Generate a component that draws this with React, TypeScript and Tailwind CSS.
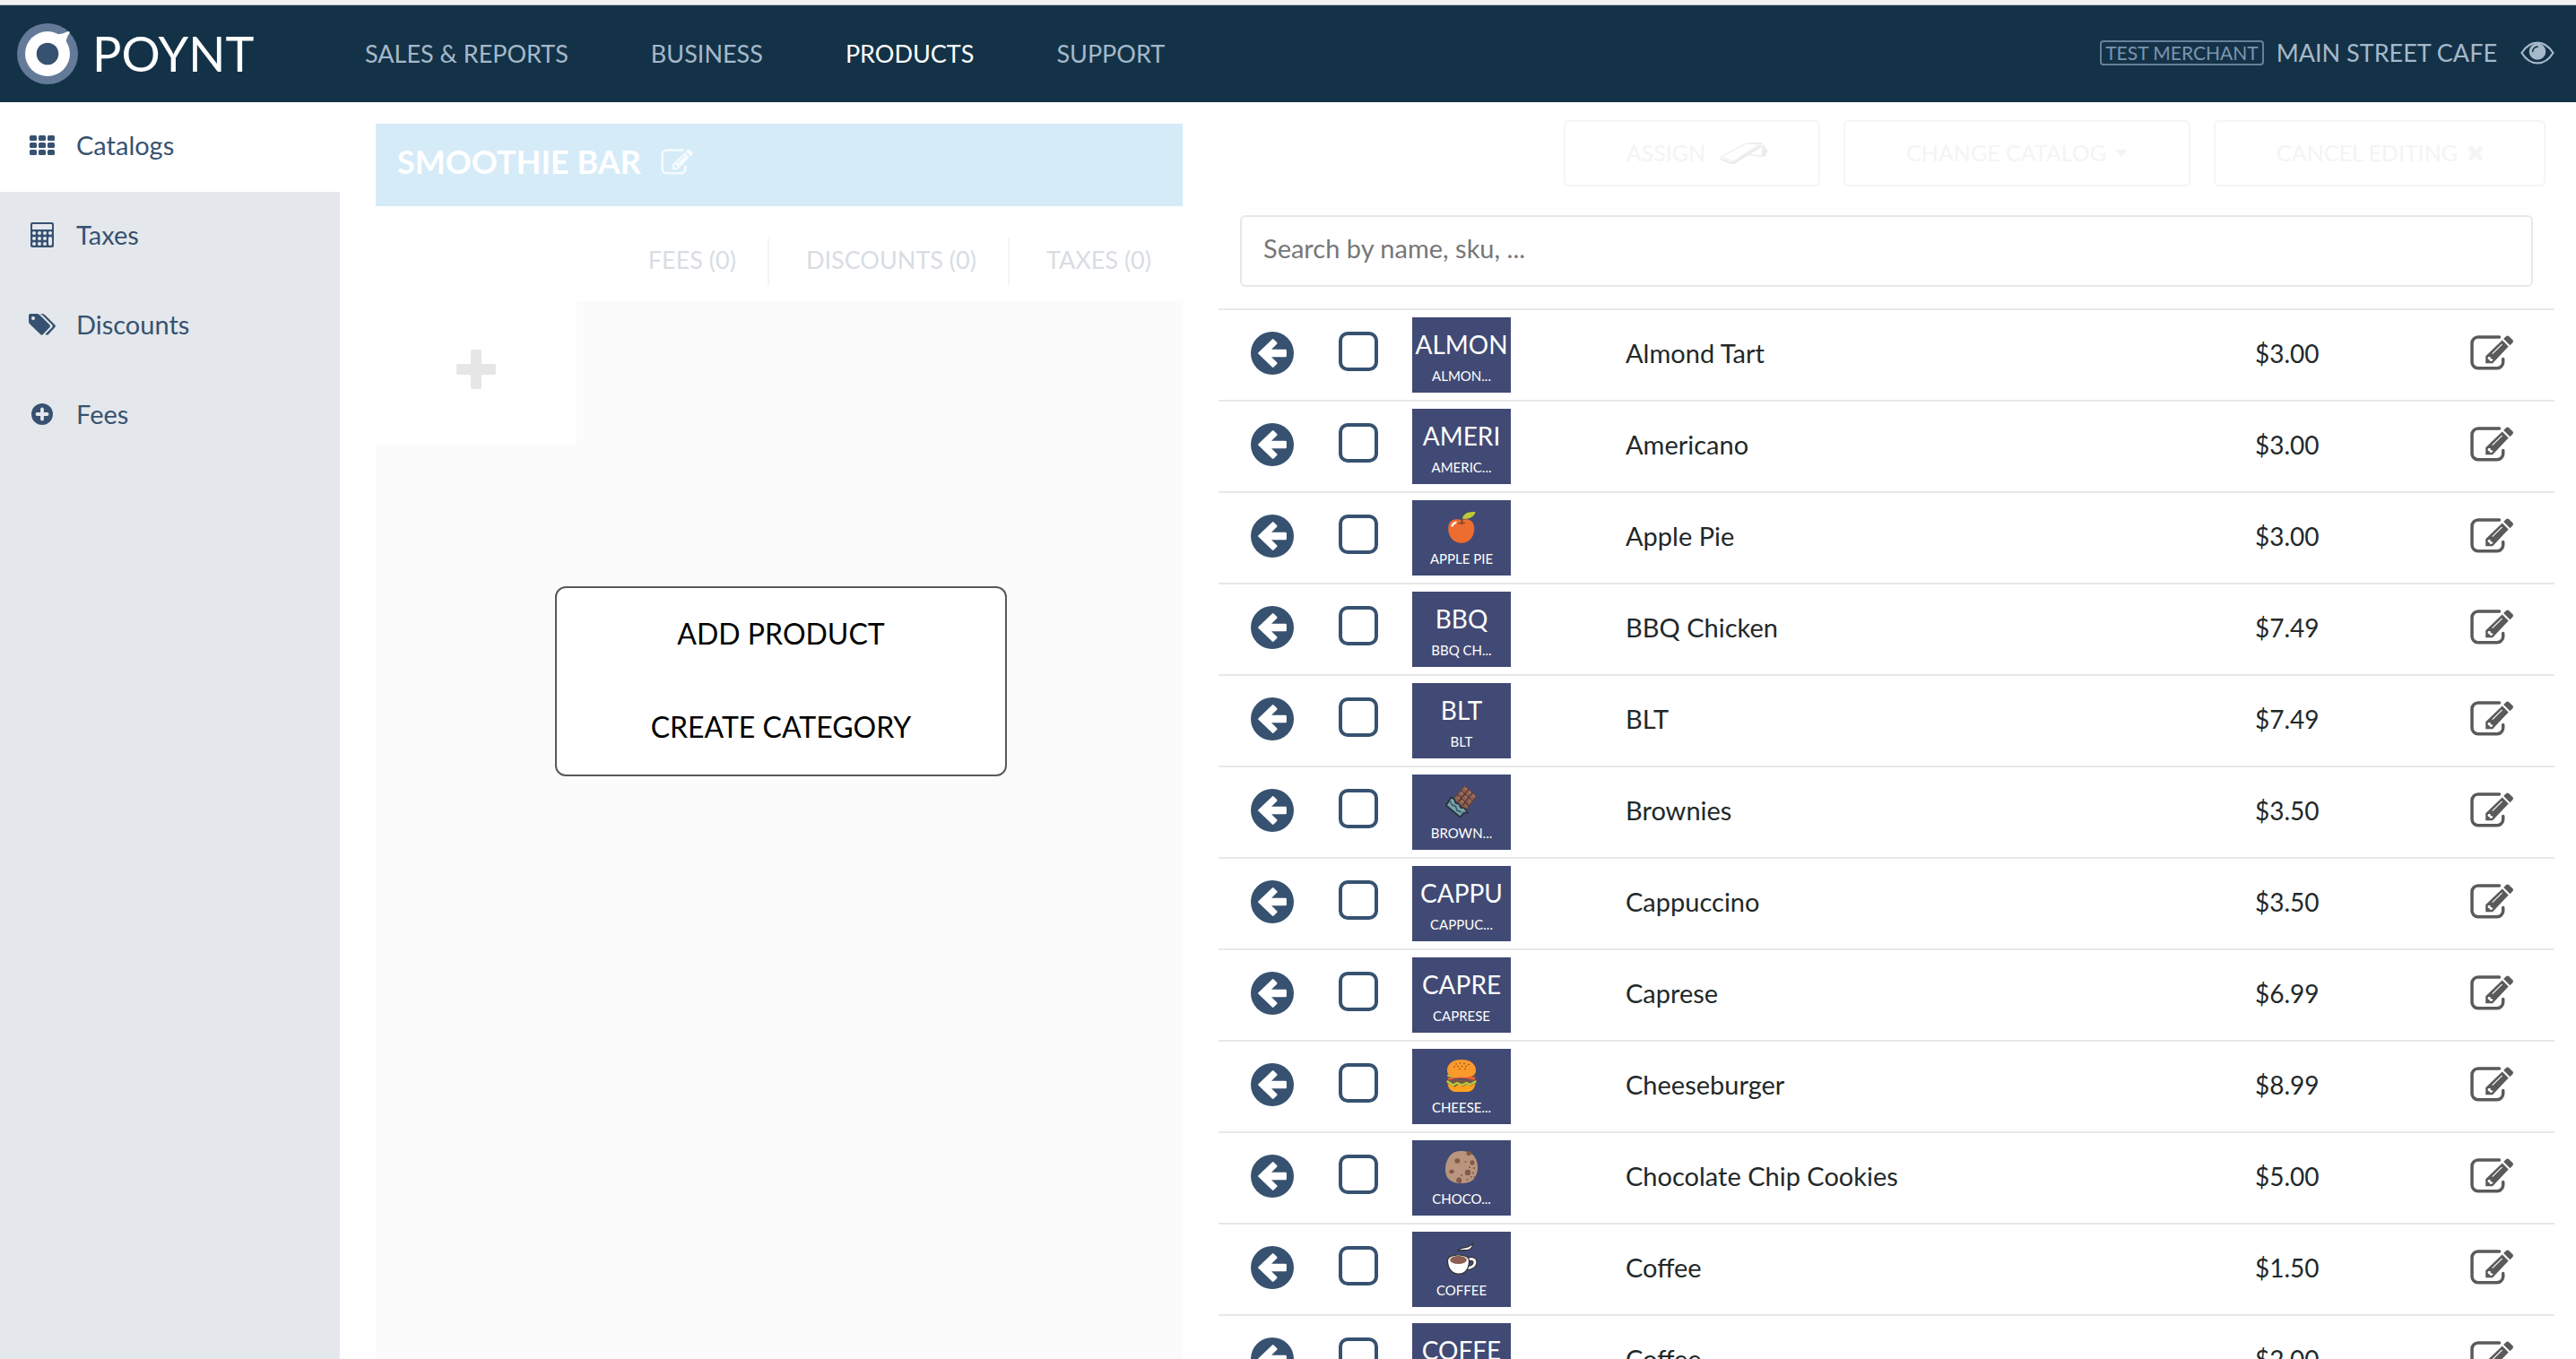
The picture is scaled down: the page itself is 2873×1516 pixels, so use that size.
import React from 'react'

type Glyph = 'apple' | 'chocolate' | 'burger' | 'cookie' | 'coffee'

interface Product {
  name: string
  price: string
  label: string
  short?: string
  glyph?: Glyph
}

const products: Product[] = [
  { name: 'Almond Tart', price: '$3.00', short: 'ALMON', label: 'ALMON...' },
  { name: 'Americano', price: '$3.00', short: 'AMERI', label: 'AMERIC...' },
  { name: 'Apple Pie', price: '$3.00', glyph: 'apple', label: 'APPLE PIE' },
  { name: 'BBQ Chicken', price: '$7.49', short: 'BBQ', label: 'BBQ CH...' },
  { name: 'BLT', price: '$7.49', short: 'BLT', label: 'BLT' },
  { name: 'Brownies', price: '$3.50', glyph: 'chocolate', label: 'BROWN...' },
  { name: 'Cappuccino', price: '$3.50', short: 'CAPPU', label: 'CAPPUC...' },
  { name: 'Caprese', price: '$6.99', short: 'CAPRE', label: 'CAPRESE' },
  { name: 'Cheeseburger', price: '$8.99', glyph: 'burger', label: 'CHEESE...' },
  { name: 'Chocolate Chip Cookies', price: '$5.00', glyph: 'cookie', label: 'CHOCO...' },
  { name: 'Coffee', price: '$1.50', glyph: 'coffee', label: 'COFFEE' },
  { name: 'Coffee', price: '$2.00', short: 'COFFE', label: 'COFFEE' },
]

function LogoMark() {
  return (
    <svg viewBox="0 0 68 68" className="size-[68px]" aria-hidden="true">
      <circle cx="34" cy="34" r="34" fill="#647a99" />
      <path d="M43 12.300c6 .3 10-1.800 14.500-3.300 1.200 0 1.600.8 1 1.800-2.800 4.500-4.500 8.500-3.300 14.500z" fill="#fff" />
      <circle cx="34" cy="34" r="25" fill="#fff" />
      <circle cx="34" cy="34" r="12.300" fill="#375270" />
    </svg>
  )
}

function EyeIcon() {
  return (
    <svg viewBox="0 0 38 26" className="h-[26px] w-[38px]" fill="none" aria-hidden="true">
      <path d="M1.500 13C6 5.600 12 1.600 19 1.600S32 5.600 36.500 13C32 20.400 26 24.400 19 24.400S6 20.400 1.500 13z" stroke="#a5b9ca" strokeWidth="2.200" strokeLinejoin="round" />
      <circle cx="19" cy="11.500" r="9.300" fill="#a5b9ca" />
      <path d="M13.700 11.500a5.400 5.400 0 0 1 5.300-5.400" stroke="#143247" strokeWidth="1.600" strokeLinecap="round" />
    </svg>
  )
}

function EditIcon({ className }: { className: string }) {
  return (
    <svg viewBox="0 0 48 39" className={className} fill="none" aria-hidden="true">
      <path d="M32.500 2H8.800A6.800 6.800 0 0 0 2 8.800v21.100a6.800 6.800 0 0 0 6.800 6.800h21.100a6.800 6.800 0 0 0 6.800-6.800V26.500" stroke="currentColor" strokeWidth="3.500" strokeLinecap="round" />
      <path
        fillRule="evenodd"
        fill="currentColor"
        d="M17.200 23.300 35.700 5.600l7 6.900L25 31.200h-7.800zM24.300 20.300l.8.8L36 10.300l-.8-.8zM20.100 24l-.6 1.600.6 1.300 1.500.3.300 1.500 1.700.3 2-1.600-.9-1-1.900-.3-.3-2z"
      />
      <path d="M37.200 4 40 1.200c1-.9 2.200-.9 3.200 0l4 3.900c1 1 1 2.200.1 3.200l-2.900 3z" fill="currentColor" />
    </svg>
  )
}

function GridIcon() {
  return (
    <svg viewBox="0 0 28 22" className="h-[22px] w-7" fill="currentColor" aria-hidden="true">
      {[0, 8, 16].map((y) => [0, 10, 20].map((x) => <rect key={`${x}-${y}`} x={x} y={y} width="8" height="6" rx="1.500" />))}
    </svg>
  )
}

function CalculatorIcon() {
  return (
    <svg viewBox="0 0 26 28" className="h-7 w-[26px]" aria-hidden="true">
      <rect width="26" height="28" rx="2" fill="currentColor" />
      <g fill="#e4e8ec">
        <rect x="2" y="2" width="22" height="6" rx=".6" />
        {[12, 18, 24].map((y) => [4, 10, 16].map((x) => <circle key={`${x}-${y}`} cx={x} cy={y} r="2" />))}
        <circle cx="22" cy="12" r="2" />
        <rect x="20" y="16" width="4" height="10" rx="2" />
      </g>
    </svg>
  )
}

function TagsIcon() {
  return (
    <svg viewBox="0 0 30 24" className="h-6 w-[30px]" fill="currentColor" aria-hidden="true">
      <path fillRule="evenodd" d="M0 2C0 .8.800 0 2 0h7c1.200 0 2.600.600 3.500 1.500L23.300 12.300c.9.900.9 2.100 0 3L16 23c-.8.900-2 .9-2.900 0L1.500 11.700C.6 10.800 0 9.400 0 8.200zM5 3a2 2 0 1 0 0 4 2 2 0 0 0 0-4z" />
      <path d="M12.300 0h2.500c1.200 0 2.700.600 3.600 1.500L29.200 12.300c.9.900.9 2.100 0 3L22 23c-1.200 1.200-2.400 1-3.400-.2L26 15.300c.9-.9.900-2.100 0-3L15.800 2C14.800 1 13.600.2 12.300 0z" />
    </svg>
  )
}

function PlusCircleIcon() {
  return (
    <svg viewBox="0 0 24 24" className="size-6" aria-hidden="true">
      <circle cx="12" cy="12" r="12" fill="currentColor" />
      <path d="M12 6.500v11M6.500 12h11" stroke="#e4e8ec" strokeWidth="3.800" strokeLinecap="round" />
    </svg>
  )
}

function ArrowLeftIcon() {
  return (
    <svg viewBox="0 0 48 48" className="size-12" aria-hidden="true">
      <circle cx="24" cy="24" r="24" fill="#375270" />
      <path d="M9.300 24 24.700 9.300l3.600 3.600-8.100 8.100h18.500v6H20.200l8.100 8.100-3.600 3.600z" fill="#fff" stroke="#fff" strokeWidth="2.400" strokeLinejoin="round" />
    </svg>
  )
}

function TerminalIcon() {
  return (
    <svg viewBox="0 0 54 24" className="h-6 w-[54px]" fill="none" aria-hidden="true">
      <path d="M1 16.500 28 1.500l17-.5-29 20z" stroke="#f1f1f1" strokeWidth="1.500" strokeLinejoin="round" />
      <path d="M0 17.500 14 22l32-20 .5 3L16 24h-3L1 19.500z" fill="#ebebeb" />
      <path d="M28 1.500 36 0h11l1 2-3-.5H28z" fill="#ebebeb" />
      <path d="m48 1.500 5.500 8L50 16l-3-1z" fill="#ebebeb" />
      <path d="M33 13.500 47 15.500 48 3" stroke="#ededed" strokeWidth="1.500" />
    </svg>
  )
}

function ProductGlyph({ glyph }: { glyph: Glyph }) {
  return (
    <svg viewBox="0 0 36 36" className="size-9" aria-hidden="true">
      {glyph === 'apple' && (
        <>
          <path d="M18 10c3-1 7-1.500 10 .5s4.500 5 4.300 9.500C32 29 26.500 35.800 18 35.800S3.200 29 3.200 20c0-4.500 1.500-8 4.600-9.700S15 9 18 10z" fill="#ed6c30" />
          <path d="M13 13.500c3-1.300 7-1.300 10 0-2.500 1.300-7.500 1.300-10 0z" fill="#a8431b" />
          <path d="M18.300 14c0-3.500.2-5 1.700-7" stroke="#6d4c41" strokeWidth="1.800" fill="none" strokeLinecap="round" />
          <path d="M19 8.500C20 3 26 .2 33.500 1.200 32 7 26 9.500 19 8.500z" fill="#c0ca33" />
          <path d="M7.500 16.500c1-2 2.500-3.300 4-3.700" stroke="#fff" strokeWidth="2.400" fill="none" strokeLinecap="round" />
        </>
      )}
      {glyph === 'chocolate' && (
        <>
          <path d="M21.500.5 34.500 12 22.500 28.500 9 15z" fill="#8d6154" stroke="#5d4037" strokeWidth="1" strokeLinejoin="round" />
          <path d="m17.300 5.800 13 12M13.200 10.500 26.500 23M25.800 4.400 13.500 19.500M30.200 8.200 18 24" stroke="#5a382f" strokeWidth="1.300" />
          <path d="M22 3.200 24 5M26.500 7l2 1.800M31 11l1.500 1.500M18 8l2 1.800M22.300 12l2 1.800M27 16l1.700 1.600M14 13l2 1.800M18.500 17l2 1.800" stroke="#b48577" strokeWidth="1.200" />
          <path d="m6.500 13.500 3.500 2 1.500 4.500 4 1 1.500 4 4.500.5 3.500 5.500-4.500-.5-4 5-6-5L.8 22.500z" fill="#78a3ad" stroke="#263238" strokeWidth="1.700" strokeLinejoin="round" />
          <path d="m5 17.500 2.500 4.500 4 1.500 1.500 4.500 5 2" stroke="#37525c" strokeWidth="1.500" fill="none" strokeLinejoin="round" />
        </>
      )}
      {glyph === 'burger' && (
        <>
          <path d="M2.500 25h31c0 7-4 11-9 11h-13c-5 0-9-4-9-11z" fill="#ffa11f" />
          <path d="M1.500 22 34.500 22c1 2.500-.2 4-1.600 4.800l-4.400 3-4-2.600-5 2.800-4.800-2.300-4 2.700-4.500-2-3.700-1.700C1.200 25.500 1 24 1.500 22z" fill="#795548" />
          <path d="m2.500 24.500 6 4 4.500-2.500 5.500 2.500 5-2.500 4.500 2 5.500-3.500" stroke="#b9cf3a" strokeWidth="2.200" fill="none" strokeLinecap="round" strokeLinejoin="round" />
          <path d="M3 21c9-2.500 21-2.500 30 0" stroke="#f4622f" strokeWidth="3.500" fill="none" />
          <path d="M2 17.500c5 4 9-1 15 0s11 2.500 16.500 0l-1 2.500c-10-2.500-20-2.500-29 .5z" fill="#795548" />
          <path d="M3 17.500c2 1.500 6 1.500 9 1.500" stroke="#b9cf3a" strokeWidth="2" fill="none" strokeLinecap="round" />
          <path d="M2 12C2 4.500 8.500 0 18 0s16 4.500 16 12c0 7-6.500 7.500-16 7.500S2 19 2 12z" fill="#fb9a2b" />
          <g fill="#7a4a2a">
            {[[12, 5], [16.500, 4], [21, 4.500], [26, 5.500], [10, 8], [14, 7.500], [18.500, 7.500], [23, 7.500], [16, 10.500], [22, 10.500]].map(([x, y]) => (
              <circle key={`${x}-${y}`} cx={x} cy={y} r=".8" />
            ))}
          </g>
        </>
      )}
      {glyph === 'cookie' && (
        <>
          <path d="M18 0c6 0 12 2 15 7 4 7 4 15 .5 21.500S24 36 17 36 4 33.500 1.500 28-.5 15 3 8.500 11 0 18 0z" fill="#b9957e" />
          <g fill="#835849">
            <path d="M24 0c2 .2 4 .8 6 2-.5 2-2 3-4 3s-2.500-1-2.500-2z" />
            <ellipse cx="13.300" cy="11" rx="3" ry="2.700" />
            <ellipse cx="30" cy="13" rx="2.500" ry="2.700" />
            <ellipse cx="7" cy="23" rx="2.700" ry="2.200" />
            <circle cx="25" cy="24" r="3.200" />
            <path d="M12.500 34.500c-1-3 1-5 3-5s3.500 2.500 2.300 6c-2 .5-4 0-5.300-1z" />
            {[[22.500, 12], [27, 18], [32, 19], [31, 24.500], [29, 29], [24.500, 32], [18, 27], [32.500, 29]].map(([x, y]) => (
              <circle key={`${x}-${y}`} cx={x} cy={y} r="1" />
            ))}
          </g>
        </>
      )}
      {glyph === 'coffee' && (
        <>
          <path d="M14 9.500c2-4 7-3 11-4.500 2.500-1 4-2 5.500-4-.2 5-2 7-6 7.500-4 .3-7-.3-10.500 1z" fill="#fff" stroke="#2f2f2f" strokeWidth="1.200" strokeLinejoin="round" />
          <path d="M25 20c3-2.500 8-2 8 2s-4 6.500-9.500 6.500" stroke="#2f2f2f" strokeWidth="5" fill="none" />
          <path d="M25 20c3-2.500 8-2 8 2s-4 6.500-9.500 6.500" stroke="#fff" strokeWidth="2.800" fill="none" />
          <path d="M2.500 20.500C2.500 16 8 13.800 14.500 13.800S26.500 16 26.500 20.500c0 8-3.500 14.700-11.500 14.700S2.500 28.500 2.500 20.500z" fill="#fff" stroke="#2f2f2f" strokeWidth="1.200" />
          <ellipse cx="14.500" cy="19.500" rx="9.300" ry="4.500" fill="#8d5f53" />
        </>
      )}
    </svg>
  )
}

const navItems = [
  { label: 'SALES & REPORTS', active: false },
  { label: 'BUSINESS', active: false },
  { label: 'PRODUCTS', active: true },
  { label: 'SUPPORT', active: false },
]

function Header() {
  return (
    <header className="shrink-0 border-t border-[#b0babb] bg-[#143247]">
      <div className="flex h-[108px] items-center pr-6 pl-[19px]">
        <a href="#home" className="flex w-[388px] items-center gap-4 text-white">
          <LogoMark />
          <span className="text-[54px] leading-none">POYNT</span>
        </a>
        <nav className="flex items-center gap-[92px] text-[27px] text-[#a5b9ca]">
          {navItems.map((item) => (
            <a key={item.label} href="#nav" className={item.active ? 'text-white' : ''}>
              {item.label}
            </a>
          ))}
        </nav>
        <div className="ml-auto flex items-center gap-3.5 pb-0.5">
          <span className="rounded-sm border-2 border-[#66809b] px-1 text-[21px] leading-6 text-[#7b95b0]">TEST MERCHANT</span>
          <a href="#merchant" className="text-[27px] text-[#a5b9ca]">MAIN STREET CAFE</a>
          <button type="button" aria-label="View as merchant" className="ml-3">
            <EyeIcon />
          </button>
        </div>
      </div>
    </header>
  )
}

const sideItems = [
  { label: 'Catalogs', icon: <GridIcon />, active: true },
  { label: 'Taxes', icon: <CalculatorIcon />, active: false },
  { label: 'Discounts', icon: <TagsIcon />, active: false },
  { label: 'Fees', icon: <PlusCircleIcon />, active: false },
]

function Sidebar() {
  return (
    <nav className="w-[379px] shrink-0 bg-[#e4e8ec] text-[29px] text-[#375270]">
      {sideItems.map((item) => (
        <a key={item.label} href="#section" className={`flex h-[100px] items-center gap-[23px] pb-1 pl-8 ${item.active ? 'bg-white' : ''}`}>
          <span className="flex w-[30px] justify-center">{item.icon}</span>
          {item.label}
        </a>
      ))}
    </nav>
  )
}

function CatalogPanel() {
  return (
    <section className="flex min-w-0 flex-col pt-6">
      <div className="flex h-[92px] shrink-0 items-center gap-[22px] bg-[#d5ebf8] px-6 pb-2 text-white">
        <h1 className="text-[36px] font-bold">SMOOTHIE BAR</h1>
        <button type="button" aria-label="Rename catalog">
          <EditIcon className="h-[29px] w-9 opacity-80" />
        </button>
      </div>
      <div className="flex h-[106px] shrink-0 justify-end pt-9 pb-[18px] text-[27px] text-[#d8dde3]">
        <button type="button" className="pr-[35px] pb-1">FEES (0)</button>
        <button type="button" className="border-l-2 border-[#f4f4f4] pr-[35px] pb-1 pl-[41px]">DISCOUNTS (0)</button>
        <button type="button" className="border-l-2 border-[#f4f4f4] pr-[35px] pb-1 pl-[41px]">TAXES (0)</button>
      </div>
      <div className="flex-1 bg-[#fbfbfb]">
        <button type="button" aria-label="Add tile" className="flex h-40 w-56 items-center justify-center bg-white pb-2">
          <svg viewBox="0 0 44 44" className="size-11" fill="#e6e6e6" aria-hidden="true">
            <rect x="16" width="12" height="44" rx="2" />
            <rect y="16" width="44" height="12" rx="2" />
          </svg>
        </button>
        <div className="flex justify-center pt-[158px] pl-1">
          <div className="w-[504px] rounded-xl border-2 border-[#595959] bg-white text-[32px] text-black">
            <button type="button" className="block h-[104px] w-full pb-0.5">ADD PRODUCT</button>
            <button type="button" className="block h-[104px] w-full pb-0.5">CREATE CATEGORY</button>
          </div>
        </div>
      </div>
    </section>
  )
}

function ProductTable() {
  return (
    <table className="mt-6 w-full table-fixed border-separate border-spacing-0 text-[29px] text-[#222829]" aria-label="Products">
      <colgroup>
        <col className="w-[134px]" />
        <col className="w-[82px]" />
        <col className="w-[238px]" />
        <col />
        <col className="w-60" />
        <col className="w-[94px]" />
      </colgroup>
      <tbody>
        {products.map((p, i) => (
          <tr key={i}>
            <td className="border-t-2 border-[#e8e8e8] pb-1 pl-9">
              <button type="button" aria-label={`Move ${p.name} to catalog`} className="block">
                <ArrowLeftIcon />
              </button>
            </td>
            <td className="border-t-2 border-[#e8e8e8] pb-2">
              <input type="checkbox" aria-label={`Select ${p.name}`} className="block size-11 appearance-none rounded-[10px] border-4 border-[#375270] bg-white checked:bg-[#375270]" />
            </td>
            <td className="border-t-2 border-[#e8e8e8] py-2">
              <div className="flex h-21 w-[110px] flex-col items-center bg-[#414a74] pt-2 text-white">
                <span className="flex h-11 items-center text-[28px]">{p.glyph ? <ProductGlyph glyph={p.glyph} /> : p.short}</span>
                <span className="text-[15px] leading-[26px]">{p.label}</span>
              </div>
            </td>
            <td className="border-t-2 border-[#e8e8e8] pb-1">{p.name}</td>
            <td className="border-t-2 border-[#e8e8e8] pb-1 text-[28px]">{p.price}</td>
            <td className="border-t-2 border-[#e8e8e8] pb-1.5">
              <button type="button" aria-label={`Edit ${p.name}`} className="block text-[#5a5a5a]">
                <EditIcon className="h-[39px] w-12" />
              </button>
            </td>
          </tr>
        ))}
      </tbody>
    </table>
  )
}

function ProductsPanel() {
  return (
    <section className="min-w-0 pt-5">
      <div className="flex justify-end gap-[26px] pr-2.5 text-[25px] text-[#f4f4f4]">
        <button type="button" className="flex h-[74px] items-center gap-4 rounded-md border-2 border-[#f5f5f5] pr-14 pl-[68px]">
          ASSIGN
          <TerminalIcon />
        </button>
        <button type="button" className="flex h-[74px] items-center gap-2.5 rounded-md border-2 border-[#f5f5f5] px-[68px]">
          CHANGE CATALOG
          <svg viewBox="0 0 14 8" className="h-2 w-3.5" fill="currentColor" aria-hidden="true">
            <path d="M0 0h14L7 8z" />
          </svg>
        </button>
        <button type="button" className="flex h-[74px] items-center gap-3 rounded-md border-2 border-[#f5f5f5] px-[68px]">
          CANCEL EDITING
          <svg viewBox="0 0 16 16" className="size-4" aria-hidden="true">
            <path d="m3 3 10 10M13 3 3 13" stroke="currentColor" strokeWidth="5.500" strokeLinecap="round" />
          </svg>
        </button>
      </div>
      <div className="mx-6 mt-8">
        <input
          type="search"
          aria-label="Search products"
          placeholder="Search by name, sku, ..."
          className="block h-20 w-full rounded-md border-2 border-[#e8e8e8] bg-white px-6 pb-2 text-[29px] text-[#222829] outline-none placeholder:text-[#777777]"
        />
      </div>
      <ProductTable />
    </section>
  )
}

export default function App() {
  return (
    <div className="flex h-screen flex-col overflow-hidden bg-white pt-[5px] font-['Lato',sans-serif] [background-image:linear-gradient(#f2f2f2,#f2f2f2)] bg-size-[100%_5px] bg-no-repeat">
      <Header />
      <div className="flex min-h-0 flex-1">
        <Sidebar />
        <main className="grid min-w-0 flex-1 grid-cols-[90fr_149fr] gap-10 pr-6 pl-10">
          <CatalogPanel />
          <ProductsPanel />
        </main>
      </div>
    </div>
  )
}
